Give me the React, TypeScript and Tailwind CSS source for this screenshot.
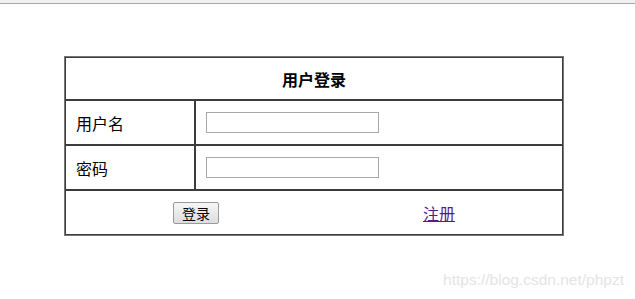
const cjk = 'font-["Microsoft_YaHei","Noto_Sans_CJK_SC",sans-serif]';

function Row({ label }: { label: string }) {
  return (
    <div className="flex h-[45px]">
      <div className="w-[130px] flex items-center pl-[10px] border border-[#3c3c3c] text-[16px] leading-none text-black">
        {label}
      </div>
      <div className="flex-1 flex items-center pl-[10px] border border-[#3c3c3c]">
        <input
          type="text"
          className="w-[173px] h-[21px] border border-[#a9a9a9] bg-white outline-none"
        />
      </div>
    </div>
  );
}

export default function App() {
  return (
    <div className={`w-[635px] h-[299px] bg-white overflow-hidden ${cjk}`}>
      <div className="h-[4px] bg-[#f0f0f0] border-b border-[#a8a8a8]" />

      <div className="ml-[64px] mt-[52px] w-[500px] border border-[#777777]">
        <div className="h-[43px] flex items-center justify-center border border-[#3c3c3c] text-[16px] font-bold leading-none text-black">
          用户登录
        </div>

        <Row label="用户名" />
        <Row label="密码" />

        <div className="h-[45px] flex items-center border border-[#3c3c3c]">
          <button className="ml-[107px] w-[46px] h-[22px] flex items-center justify-center border border-[#9a9a9a] rounded-[2px] bg-gradient-to-b from-[#f6f6f6] to-[#dddddd] text-[14px] leading-none text-black">
            登录
          </button>
          <a href="#" className="ml-[204px] text-[16px] leading-none text-[#551a8b] underline">
            注册
          </a>
        </div>
      </div>

      <div className="mt-[35px] pr-[11px] text-right font-['Liberation_Sans',Arial,sans-serif] text-[15.5px] leading-[18px] text-[#e4e4e4]">
        https://blog.csdn.net/phpzt
      </div>
    </div>
  );
}
